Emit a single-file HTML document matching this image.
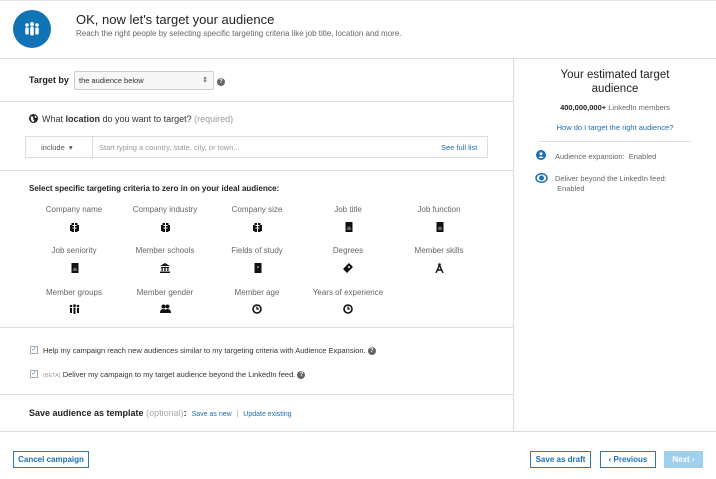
<!DOCTYPE html>
<html><head><meta charset="utf-8"><style>
*{box-sizing:border-box;margin:0;padding:0}
body{width:716px;height:479px;overflow:hidden;background:#fff;font-family:"Liberation Sans",Arial,sans-serif;color:#333;position:relative}
.a{position:absolute}
.hl{position:absolute;height:1px;background:#ddd}
.lbl{position:absolute;font-size:8px;color:#666;text-align:center;width:90px}
.ic{position:absolute;width:90px;text-align:center;height:12px}
.ic svg{display:inline-block}
.blue{color:#1c6fb5}
.btn{position:absolute;height:17px;border:1px solid #2a7ac0;color:#1c6fb5;font-size:8px;font-weight:bold;text-align:center;line-height:15px;background:#fff}
.q{display:inline-block;width:8px;height:8px;border-radius:50%;background:#666;color:#fff;font-size:6px;line-height:8px;text-align:center;font-weight:bold;vertical-align:middle}
.cb{position:absolute;width:8px;height:8px;border:1px solid #aaa;font-size:6px;line-height:6px;color:#1c6fb5;text-align:center}
</style></head><body>
<svg width="0" height="0" style="position:absolute"><defs>
<g id="bld"><rect x="1.5" y="1" width="6" height="9" fill="#111"/><rect x="0" y="3" width="9" height="6" fill="#111"/><rect x="2.5" y="3" width="4" height="1" fill="#fff"/><rect x="2.5" y="5.5" width="4" height="1" fill="#fff"/><rect x="4" y="1" width="1" height="9" fill="#fff"/></g>
<g id="doc"><rect x="1.5" y="0" width="7" height="10" fill="#111"/><path d="M3 6 L5 4 L7 6 L7 8 L3 8Z" fill="#666"/></g>
<g id="clk"><circle cx="5" cy="5" r="4" fill="none" stroke="#111" stroke-width="1.6"/><path d="M5 2.5 V5 H7" fill="none" stroke="#111" stroke-width="1.3"/></g>
</defs></svg>
<div class="hl" style="top:0;left:0;width:716px;background:#e4e4e4"></div>
<div class="a" style="left:13px;top:10px;width:38px;height:38px;border-radius:50%;background:#0f73b5"></div>
<svg class="a" style="left:22px;top:19px" width="20" height="20" viewBox="0 0 20 20" fill="#fff"><circle cx="5" cy="6" r="1.8"/><circle cx="10" cy="5" r="2"/><circle cx="15" cy="6" r="1.8"/><rect x="3.3" y="8.5" width="3.4" height="7" rx="1"/><rect x="8.2" y="7.5" width="3.6" height="9" rx="1"/><rect x="13.3" y="8.5" width="3.4" height="7" rx="1"/></svg>
<div class="a" style="left:76px;top:12px;font-size:13px;color:#222">OK, now let's target your audience</div>
<div class="a" style="left:76px;top:29px;font-size:8px;color:#666">Reach the right people by selecting specific targeting criteria like job title, location and more.</div>
<div class="hl" style="top:58px;left:0;width:716px"></div>
<div class="a" style="left:513px;top:58px;width:1px;height:373px;background:#ddd"></div>

<div class="a" style="left:29px;top:75px;font-size:9px;font-weight:bold;color:#222">Target by</div>
<div class="a" style="left:74px;top:71px;width:140px;height:19px;border:1px solid #ccc;border-radius:2px;background:#f7f7f7;font-size:7.5px;line-height:17px;padding-left:4px;color:#333">the audience below<span style="position:absolute;right:5px;top:0;font-size:7px">&#8661;</span></div>
<div class="a" style="left:217px;top:73px"><span class="q">?</span></div>
<div class="hl" style="top:101px;left:0;width:513px"></div>

<svg class="a" style="left:29px;top:114px" width="9" height="9" viewBox="0 0 10 10"><circle cx="5" cy="5" r="5" fill="#222"/><path d="M2 3 Q4 2 5 4 Q4 6 6 7 L5 9 Q2 8 2 5Z M6 1.5 Q8 2 8.5 4 L7 4.5Z" fill="#fff"/></svg>
<div class="a" style="left:42px;top:114px;font-size:9px;color:#333">What <b>location</b> do you want to target? <span style="color:#999">(required)</span></div>
<div class="a" style="left:25px;top:136px;width:463px;height:22px;border:1px solid #ddd"></div>
<div class="a" style="left:92px;top:136px;width:1px;height:22px;background:#ddd"></div>
<div class="a" style="left:41px;top:143px;font-size:7.5px;color:#555">include &nbsp;&#9662;</div>
<div class="a" style="left:99px;top:143px;font-size:7.5px;color:#999">Start typing a country, state, city, or town...</div>
<div class="a blue" style="left:441px;top:143px;font-size:7.5px">See full list</div>
<div class="hl" style="top:170px;left:0;width:513px"></div>

<div class="a" style="left:29px;top:184px;font-size:8px;font-weight:bold;color:#222">Select specific targeting criteria to zero in on your ideal audience:</div>

<div class="lbl" style="left:29px;top:205px">Company name</div><div class="ic" style="left:29px;top:219px"><svg width="9" height="10"><use href="#bld"/></svg></div>
<div class="lbl" style="left:120px;top:205px">Company industry</div><div class="ic" style="left:120px;top:219px"><svg width="9" height="10"><use href="#bld"/></svg></div>
<div class="lbl" style="left:212px;top:205px">Company size</div><div class="ic" style="left:212px;top:219px"><svg width="9" height="10"><use href="#bld"/></svg></div>
<div class="lbl" style="left:303px;top:205px">Job title</div><div class="ic" style="left:303px;top:219px"><svg width="9" height="10"><use href="#doc"/></svg></div>
<div class="lbl" style="left:394px;top:205px">Job function</div><div class="ic" style="left:394px;top:219px"><svg width="9" height="10"><use href="#doc"/></svg></div>

<div class="lbl" style="left:29px;top:246px">Job seniority</div><div class="ic" style="left:29px;top:260px"><svg width="9" height="10"><use href="#doc"/></svg></div>
<div class="lbl" style="left:120px;top:246px">Member schools</div><div class="ic" style="left:120px;top:260px"><svg width="10" height="10" viewBox="0 0 10 10"><path d="M0 3 L5 0 L10 3Z M1 4 H9 V5 H1Z M1.5 5 H2.8 V8 H1.5Z M4.3 5 H5.7 V8 H4.3Z M7.2 5 H8.5 V8 H7.2Z M0 8.5 H10 V10 H0Z" fill="#111"/></svg></div>
<div class="lbl" style="left:212px;top:246px">Fields of study</div><div class="ic" style="left:212px;top:260px"><svg width="9" height="10"><rect x="1.5" y="0" width="7" height="10" fill="#111"/><rect x="4" y="3" width="2" height="2" fill="#777"/></svg></div>
<div class="lbl" style="left:303px;top:246px">Degrees</div><div class="ic" style="left:303px;top:260px"><svg width="10" height="10" viewBox="0 0 10 10"><path d="M0 6 L6 0 L10 4 L4 10Z" fill="#111"/><circle cx="6" cy="4" r="1" fill="#fff"/></svg></div>
<div class="lbl" style="left:394px;top:246px">Member skills</div><div class="ic" style="left:394px;top:260px"><svg width="9" height="10" viewBox="0 0 9 10"><circle cx="4.5" cy="1.5" r="1.3" fill="#111"/><path d="M4.5 2 L1 10 M4.5 2 L8 10 M2.2 7 H6.8" stroke="#111" stroke-width="1.4" fill="none"/></svg></div>

<div class="lbl" style="left:29px;top:288px">Member groups</div><div class="ic" style="left:29px;top:301px"><svg width="11" height="10" viewBox="0 0 11 10" fill="#111"><circle cx="2" cy="2" r="1.3"/><circle cx="5.5" cy="1.6" r="1.4"/><circle cx="9" cy="2" r="1.3"/><rect x="1" y="4" width="2" height="5"/><rect x="4.5" y="3.5" width="2" height="6.5"/><rect x="8" y="4" width="2" height="5"/></svg></div>
<div class="lbl" style="left:120px;top:288px">Member gender</div><div class="ic" style="left:120px;top:301px"><svg width="11" height="10" viewBox="0 0 11 10" fill="#111"><circle cx="3.5" cy="2.5" r="2"/><circle cx="7.5" cy="2.5" r="2"/><path d="M0 9 Q0 5 3.5 5 Q7 5 7 9Z M5 9 Q5 5 7.5 5 Q11 5 11 9Z"/></svg></div>
<div class="lbl" style="left:212px;top:288px">Member age</div><div class="ic" style="left:212px;top:301px"><svg width="10" height="10"><use href="#clk"/></svg></div>
<div class="lbl" style="left:303px;top:288px">Years of experience</div><div class="ic" style="left:303px;top:301px"><svg width="10" height="10"><use href="#clk"/></svg></div>
<div class="hl" style="top:327px;left:0;width:513px"></div>

<div class="cb" style="left:30px;top:346px">&#10003;</div>
<div class="a" style="left:43px;top:346px;font-size:7.5px;color:#333">Help my campaign reach new audiences similar to my targeting criteria with Audience Expansion. <span class="q">?</span></div>
<div class="cb" style="left:30px;top:370px">&#10003;</div>
<div class="a" style="left:43px;top:370px;font-size:7.5px;color:#333"><span style="font-size:5.5px;color:#999">(BETA)</span> Deliver my campaign to my target audience beyond the LinkedIn feed. <span class="q">?</span></div>
<div class="hl" style="top:394px;left:0;width:513px"></div>

<div class="a" style="left:29px;top:408px;font-size:9px;color:#222"><b>Save audience as template</b> <span style="color:#aaa">(optional)</span><b>:</b> &nbsp;<span class="blue" style="font-size:7px">Save as new</span> <span style="color:#aaa;font-size:8px">&nbsp;|&nbsp;</span> <span class="blue" style="font-size:7px">Update existing</span></div>
<div class="hl" style="top:431px;left:0;width:716px"></div>

<div class="btn" style="left:13px;top:451px;width:76px">Cancel campaign</div>
<div class="btn" style="left:530px;top:451px;width:61px">Save as draft</div>
<div class="btn" style="left:600px;top:451px;width:56px">&#8249; Previous</div>
<div class="btn" style="left:664px;top:451px;width:39px;background:#9fd0ec;border-color:#9fd0ec;color:#fff">Next &#8250;</div>

<div class="a" style="left:514px;top:68px;width:202px;text-align:center;font-size:11.5px;color:#222;line-height:14px">Your estimated target<br>audience</div>
<div class="a" style="left:514px;top:103px;width:202px;text-align:center;font-size:7.5px;color:#666"><b style="color:#222">400,000,000+</b> LinkedIn members</div>
<div class="a blue" style="left:514px;top:123px;width:202px;text-align:center;font-size:7.5px">How do I target the right audience?</div>
<div class="hl" style="top:141px;left:539px;width:152px"></div>
<svg class="a" style="left:536px;top:150px" width="10" height="10" viewBox="0 0 10 10"><circle cx="5" cy="5" r="5" fill="#1c6fb5"/><circle cx="5" cy="3.8" r="1.5" fill="#fff"/><path d="M2.5 8 Q5 4.5 7.5 8Z" fill="#fff"/></svg>
<div class="a" style="left:555px;top:152px;font-size:7.5px;color:#666">Audience expansion:&nbsp; Enabled</div>
<svg class="a" style="left:535px;top:173px" width="13" height="10" viewBox="0 0 13 10"><ellipse cx="6.5" cy="5" rx="5.5" ry="4.3" fill="none" stroke="#1c6fb5" stroke-width="1.5"/><circle cx="6.5" cy="5" r="2.5" fill="#1c6fb5"/></svg>
<div class="a" style="left:555px;top:174px;font-size:7.5px;color:#666;line-height:10px">Deliver beyond the LinkedIn feed:<br>&nbsp;Enabled</div>
</body></html>
